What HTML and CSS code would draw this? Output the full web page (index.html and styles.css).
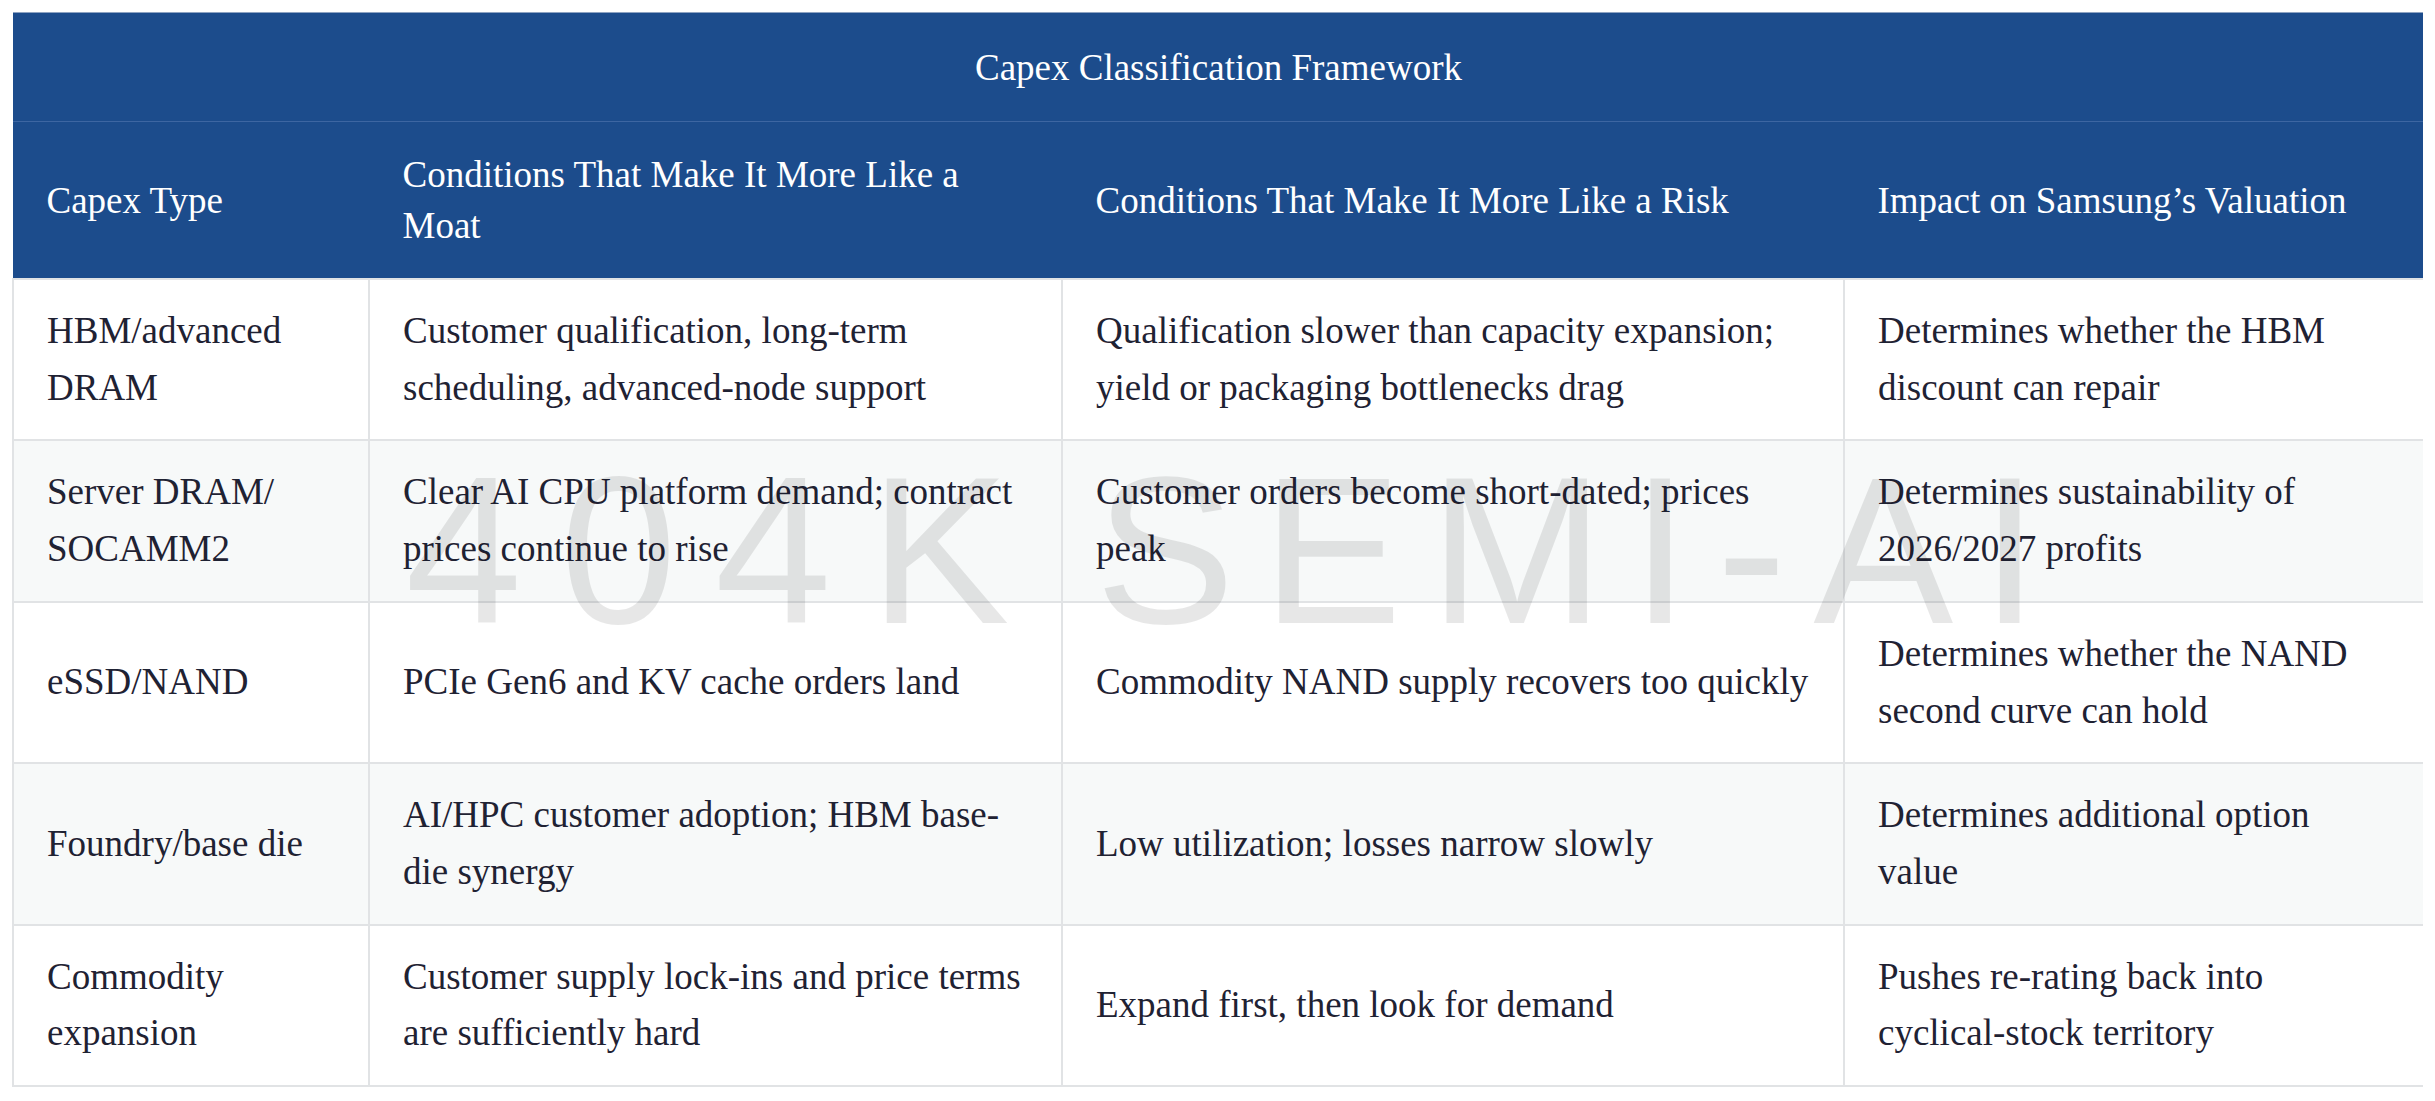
FILE: index.html
```html
<!DOCTYPE html>
<html lang="en">
<head>
<meta charset="utf-8">
<title>Capex Classification Framework</title>
<link rel="stylesheet" href="styles.css">
</head>
<body>
<table class="framework">
  <colgroup>
    <col class="c1">
    <col class="c2">
    <col class="c3">
    <col class="c4">
  </colgroup>
  <thead>
    <tr class="title-row">
      <th colspan="4" class="title">Capex Classification Framework</th>
    </tr>
    <tr class="head-row">
      <th>Capex Type</th>
      <th>Conditions That Make It More Like a Moat</th>
      <th>Conditions That Make It More Like a Risk</th>
      <th>Impact on Samsung’s Valuation</th>
    </tr>
  </thead>
  <tbody>
    <tr>
      <td>HBM/advanced DRAM</td>
      <td>Customer qualification, long-term scheduling, advanced-node support</td>
      <td>Qualification slower than capacity expansion; yield or packaging bottlenecks drag</td>
      <td>Determines whether the HBM discount can repair</td>
    </tr>
    <tr>
      <td>Server DRAM/<wbr>SOCAMM2</td>
      <td>Clear AI CPU platform demand; contract prices continue to rise</td>
      <td>Customer orders become short-dated; prices peak</td>
      <td>Determines sustainability of 2026/2027 profits</td>
    </tr>
    <tr>
      <td>eSSD/NAND</td>
      <td>PCIe Gen6 and KV cache orders land</td>
      <td>Commodity NAND supply recovers too quickly</td>
      <td>Determines whether the NAND second curve can hold</td>
    </tr>
    <tr>
      <td>Foundry/base die</td>
      <td>AI/HPC customer adoption; HBM base-die synergy</td>
      <td>Low utilization; losses narrow slowly</td>
      <td>Determines additional option value</td>
    </tr>
    <tr>
      <td>Commodity expansion</td>
      <td>Customer supply lock-ins and price terms are sufficiently hard</td>
      <td>Expand first, then look for demand</td>
      <td>Pushes re-rating back into cyclical-stock territory</td>
    </tr>
  </tbody>
</table>
<div class="watermark" aria-hidden="true"><span class="wm-num">404K</span><span class="wm-word"> SEMI-AI</span></div>
</body>
</html>
```
FILE: styles.css
```css
html, body {
  background: #ffffff;
}
body {
  margin: 12px;
  font-family: "Liberation Serif", "Times New Roman", serif;
  font-size: 37px;
  color: #1f2233;
}
.framework {
  width: 2411px;
  table-layout: fixed;
  border-collapse: collapse;
  border: 1px solid #dcdfe2;
}
.c1 { width: 356px; }
.c2 { width: 693px; }
.c3 { width: 782px; }
.c4 { width: 580px; }

.framework th {
  background: #1c4c8c;
  color: #ffffff;
  font-weight: normal;
  text-align: left;
  line-height: 51px;
  padding: 27px 33px;
  border: 1px solid #1c4c8c;
  vertical-align: middle;
}
.framework th.title {
  text-align: center;
  padding: 29px 33px 28px;
  border-top: 1px solid #8ea3c2;
  border-bottom: 1px solid #3d66a2;
}
.framework td {
  line-height: 56.7px;
  padding: 23px 33px;
  border: 2px solid #e1e3e5;
  vertical-align: middle;
  background: #ffffff;
}
.framework tbody tr:nth-child(even) td {
  background: #f7f9f9;
}
.watermark {
  position: fixed;
  left: calc(50% + 18px);
  top: 50%;
  transform: translate(-50%, -50%);
  font-family: "Liberation Sans", Arial, sans-serif;
  font-size: 210px;
  line-height: 1;
  white-space: nowrap;
  color: rgba(0, 0, 0, 0.095);
  pointer-events: none;
}
.wm-num {
  letter-spacing: 38px;
}
.wm-word {
  letter-spacing: 27px;
  word-spacing: -38px;
}
```
